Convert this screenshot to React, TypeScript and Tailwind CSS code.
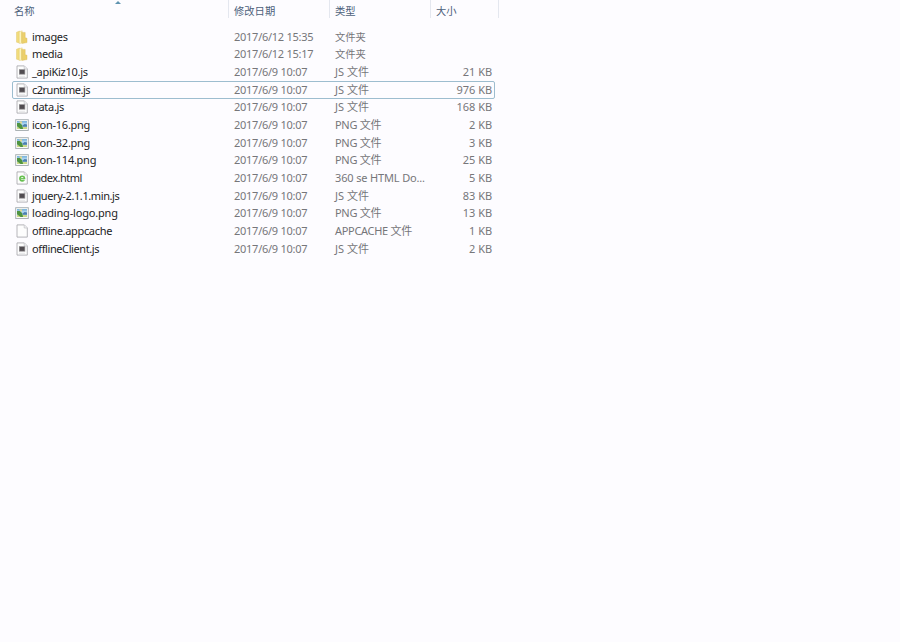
import clsx from 'clsx';

type Kind = 'folder' | 'js' | 'png' | 'html' | 'blank';

interface FileItem {
  name: string;
  date: string;
  type: string;
  size: string;
  kind: Kind;
  tracking: string;
  focused?: boolean;
}

const files: FileItem[] = [
  {
    name: 'images',
    date: '2017/6/12 15:35',
    type: '文件夹',
    size: '',
    kind: 'folder',
    tracking: 'tracking-[-0.3px]'
  },
  {
    name: 'media',
    date: '2017/6/12 15:17',
    type: '文件夹',
    size: '',
    kind: 'folder',
    tracking: 'tracking-[-0.35px]'
  },
  {
    name: '_apiKiz10.js',
    date: '2017/6/9 10:07',
    type: 'JS 文件',
    size: '21 KB',
    kind: 'js',
    tracking: 'tracking-[-0.28px]'
  },
  {
    name: 'c2runtime.js',
    date: '2017/6/9 10:07',
    type: 'JS 文件',
    size: '976 KB',
    kind: 'js',
    tracking: 'tracking-[-0.5px]',
    focused: true
  },
  {
    name: 'data.js',
    date: '2017/6/9 10:07',
    type: 'JS 文件',
    size: '168 KB',
    kind: 'js',
    tracking: 'tracking-[-0.3px]'
  },
  {
    name: 'icon-16.png',
    date: '2017/6/9 10:07',
    type: 'PNG 文件',
    size: '2 KB',
    kind: 'png',
    tracking: 'tracking-[-0.26px]'
  },
  {
    name: 'icon-32.png',
    date: '2017/6/9 10:07',
    type: 'PNG 文件',
    size: '3 KB',
    kind: 'png',
    tracking: 'tracking-[-0.26px]'
  },
  {
    name: 'icon-114.png',
    date: '2017/6/9 10:07',
    type: 'PNG 文件',
    size: '25 KB',
    kind: 'png',
    tracking: 'tracking-[-0.26px]'
  },
  {
    name: 'index.html',
    date: '2017/6/9 10:07',
    type: '360 se HTML Do...',
    size: '5 KB',
    kind: 'html',
    tracking: 'tracking-[-0.52px]'
  },
  {
    name: 'jquery-2.1.1.min.js',
    date: '2017/6/9 10:07',
    type: 'JS 文件',
    size: '83 KB',
    kind: 'js',
    tracking: 'tracking-[-0.4px]'
  },
  {
    name: 'loading-logo.png',
    date: '2017/6/9 10:07',
    type: 'PNG 文件',
    size: '13 KB',
    kind: 'png',
    tracking: 'tracking-[-0.17px]'
  },
  {
    name: 'offline.appcache',
    date: '2017/6/9 10:07',
    type: 'APPCACHE 文件',
    size: '1 KB',
    kind: 'blank',
    tracking: 'tracking-[-0.33px]'
  },
  {
    name: 'offlineClient.js',
    date: '2017/6/9 10:07',
    type: 'JS 文件',
    size: '2 KB',
    kind: 'js',
    tracking: 'tracking-[-0.4px]'
  }
];

const FolderIcon = () => (
  <>
    <path d="M1.5 2.2 4.6 1v12l-3.1-.8z" fill="#f2dc7c" stroke="#dcc063" strokeWidth=".4" />
    <path d="M4.2 1.8 7.2.8v12.4l-3 .2z" fill="#fcf4c0" stroke="#e0c566" strokeWidth=".4" />
    <path d="M7.2 2.4h3v5.4l1.8.4v4.4l-4.8.8z" fill="#ecd06a" stroke="#d9b955" strokeWidth=".4" />
    <path d="M6.6 1.8v11" stroke="#e2c65c" strokeWidth=".7" />
  </>
);

const Sheet = () => (
  <>
    <path d="M2 .9h7.3l3 3v9.2H2z" fill="#fdfdfd" stroke="#a3a3a8" strokeWidth=".8" />
    <path d="M9.2 1v3h3" fill="#f2f2f4" stroke="#b9b9be" strokeWidth=".6" />
  </>
);

const PictureIcon = () => (
  <>
    <rect x=".7" y="1.7" width="12.6" height="10.8" fill="#fbfcfb" stroke="#a3abae" strokeWidth=".9" />
    <path d="M2 3h10v8H2z" fill="#a9d3ee" />
    <path d="M2 3h10v1.6H2z" fill="#7fb6e0" />
    <path d="M2 9h10v2H2z" fill="#c9d98a" />
    <path d="M2 5h3l2.4 2.4L8 11H5.6L2 8.2z" fill="#4f9440" />
    <path d="M7.6 7.6 9.6 6 12 6.4v2.4H8z" fill="#4e7fae" />
    <path d="M4 3.6h3.2L6.4 6z" fill="#efdc84" />
  </>
);

const FileIcon = ({ kind }: { kind: Kind }) => (
  <svg viewBox="0 0 14 14" className="h-[14px] w-[14px] shrink-0">
    {kind === 'folder' && <FolderIcon />}
    {kind === 'png' && <PictureIcon />}
    {(kind === 'js' || kind === 'html' || kind === 'blank') && <Sheet />}
    {kind === 'js' && (
      <>
        <rect x="4" y="4.2" width="6.2" height="5.4" fill="#8b888c" />
        <rect x="4.9" y="5" width="4.4" height="3.8" fill="#514c51" />
        <path d="M4 11.3h6" stroke="#d5d5d8" strokeWidth=".6" />
      </>
    )}
    {kind === 'html' && (
      <>
        <circle cx="7.2" cy="7.6" r="2.3" fill="none" stroke="#66bf50" strokeWidth="1.6" />
        <path d="M5.4 7.7h4.7" stroke="#66bf50" strokeWidth="1.2" />
        <path d="M8.4 8.7h2" stroke="#fdfdfd" strokeWidth=".8" />
      </>
    )}
  </svg>
);

const Header = () => (
  <div className="flex h-[18px] text-[10.3px] leading-[23px] text-[#4c607a]">
    <div className="relative w-[228px] pl-[14px]">
      名称
      <svg viewBox="0 0 6 3" className="absolute left-[115px] top-px h-[3px] w-[6px]">
        <path d="M0 3 3 0l3 3z" fill="#5f93b0" />
      </svg>
    </div>
    <div className="w-[101px] border-l border-[#e4e7ef] pl-[5px]">修改日期</div>
    <div className="w-[101px] border-l border-[#e4e7ef] pl-[5px]">类型</div>
    <div className="w-[69px] border-x border-[#e4e7ef] pl-[5px]">大小</div>
  </div>
);

const FileRow = ({ file }: { file: FileItem }) => (
  <div
    className={clsx(
      'flex h-[17.667px] w-[483px] items-center rounded-[2px] border pl-[2px] pr-[2px] text-[#76767a]',
      file.focused ? 'border-[#9dbdcf]' : 'border-transparent'
    )}
  >
    <FileIcon kind={file.kind} />
    <span className={clsx('ml-[3px] w-[202px] text-[#1c1c1e]', file.tracking)}>{file.name}</span>
    <span className="w-[101px] tracking-[-0.26px]">{file.date}</span>
    <span
      className={clsx(
        'w-[101px]',
        file.kind === 'folder' && 'text-[10.3px]',
        (file.kind === 'blank' || file.kind === 'png') && 'tracking-[-0.3px]',
        file.kind === 'html' && 'tracking-[-0.15px]'
      )}
    >
      {file.type}
    </span>
    <span className="flex-1 text-right tracking-[-0.05px]">{file.size}</span>
  </div>
);

const App = () => {
  return (
    <div className="h-[642px] w-[900px] overflow-hidden whitespace-nowrap bg-[#fdfcff] font-['Noto_Sans','Noto_Sans_CJK_SC',sans-serif] text-[11px] leading-[16px]">
      <Header />
      <div className="pl-[12px] pt-[10px]">
        {files.map((file) => (
          <FileRow key={file.name} file={file} />
        ))}
      </div>
    </div>
  );
};

export default App;
